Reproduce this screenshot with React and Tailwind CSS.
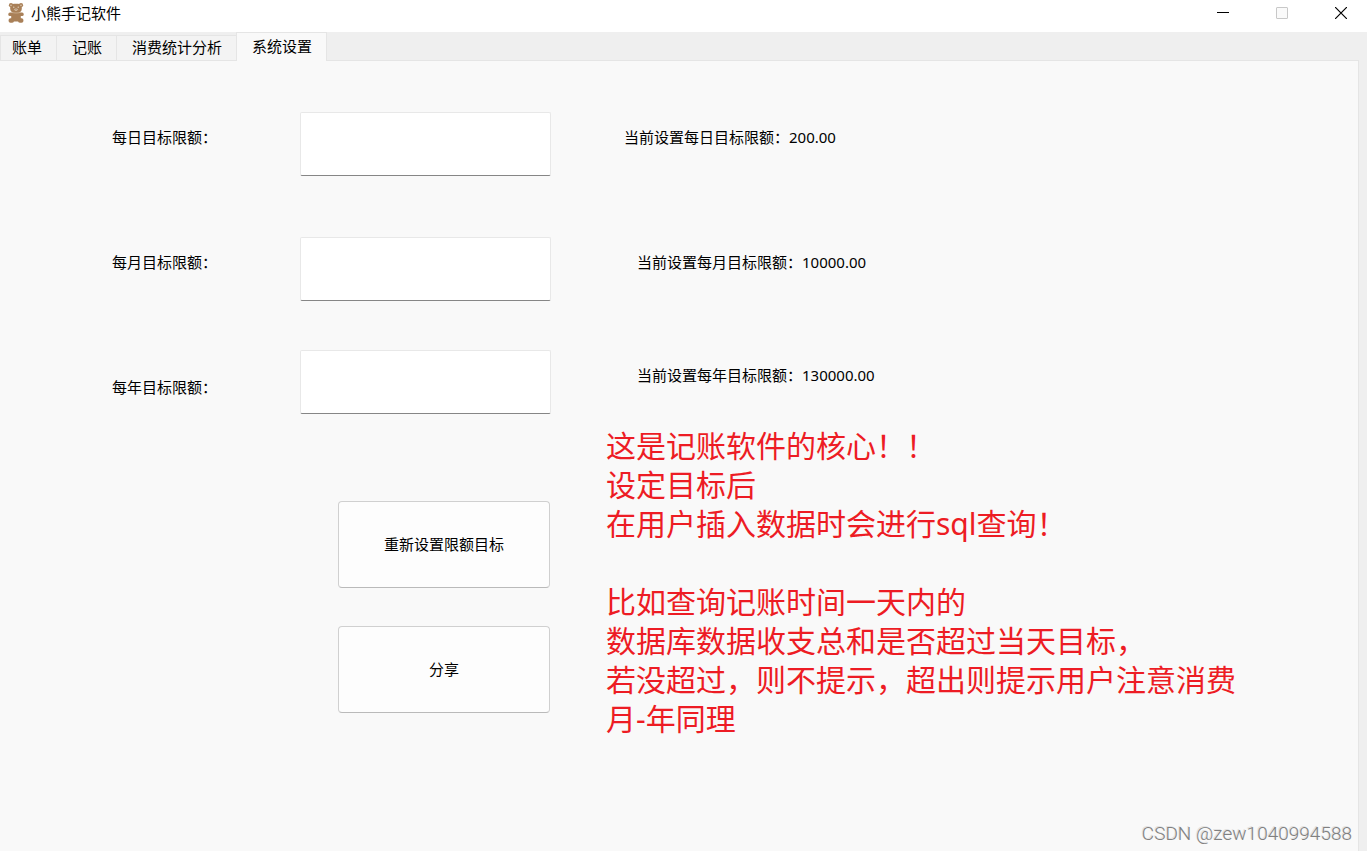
import React, { useState } from "react";
import clsx from "clsx";

const TABS = ["账单", "记账", "消费统计分析", "系统设置"];

const LIMITS = [
  { id: "daily", label: "每日目标限额：", current: "当前设置每日目标限额：200.00", row: "h-[125px]", labelPos: "mt-[15px]", currentPos: "ml-[73px]" },
  { id: "monthly", label: "每月目标限额：", current: "当前设置每月目标限额：10000.00", row: "h-[113px]", labelPos: "mt-[15px]", currentPos: "ml-[86px]" },
  { id: "yearly", label: "每年目标限额：", current: "当前设置每年目标限额：130000.00", row: "h-[76px]", labelPos: "mt-[27px]", currentPos: "ml-[86px]" },
];

const NOTES = [
  "这是记账软件的核心！！",
  "设定目标后",
  "在用户插入数据时会进行sql查询！",
  "",
  "比如查询记账时间一天内的",
  "数据库数据收支总和是否超过当天目标，",
  "若没超过，则不提示，超出则提示用户注意消费",
  "月-年同理",
];

const BearIcon = () => (
  <svg viewBox="0 0 16 20" className="h-5 w-4" fill="#a98058">
    <circle cx="3" cy="2.2" r="2.1" />
    <circle cx="13" cy="2.2" r="2.1" />
    <rect x="2.2" y="0.8" width="11.6" height="8.8" rx="4" />
    <rect x="3.2" y="9" width="9.6" height="9.4" rx="3" />
    <rect x="0.3" y="9.6" width="15.4" height="3.4" rx="1.6" />
    <rect x="0.6" y="15.2" width="5.4" height="4.6" rx="1.8" />
    <rect x="10" y="15.2" width="5.4" height="4.6" rx="1.8" />
    <circle cx="3" cy="2.4" r="0.8" fill="#d8c2a8" />
    <circle cx="13" cy="2.4" r="0.8" fill="#d8c2a8" />
    <ellipse cx="8" cy="6.6" rx="1.6" ry="1.2" fill="#e0cdb8" />
    <circle cx="5.8" cy="4.2" r="0.6" fill="#f0e6da" />
    <circle cx="10.2" cy="4.2" r="0.6" fill="#f0e6da" />
    <circle cx="8" cy="6.3" r="0.5" fill="#7d5a3a" />
    <path d="M3.5 9.4c2.8 0.8 6.2 0.8 9 0" fill="none" stroke="#d8c2a8" strokeWidth="0.6" />
  </svg>
);

const TitleBar = () => (
  <header className="flex h-8 items-start justify-between bg-white">
    <div className="flex items-center gap-[7px] pt-[3px] pl-2">
      <BearIcon />
      <h1 className="leading-5">小熊手记软件</h1>
    </div>
    <div className="flex h-[26px] items-center gap-[47px] pr-5">
      <button type="button" aria-label="最小化">
        <svg viewBox="0 0 12 12" className="size-3" stroke="#000">
          <path d="M0 5.5h12" />
        </svg>
      </button>
      <button type="button" aria-label="最大化" disabled>
        <svg viewBox="0 0 12 12" className="size-3" fill="#fafafa" stroke="#c8c8c8">
          <rect x="0.5" y="0.5" width="11" height="11" rx="0.5" />
        </svg>
      </button>
      <button type="button" aria-label="关闭">
        <svg viewBox="0 0 12 12" className="size-3" stroke="#000" strokeWidth="1.2">
          <path d="M0 0l12 12M12 0L0 12" />
        </svg>
      </button>
    </div>
  </header>
);

const TabBar = ({ active, onChange }) => (
  <nav role="tablist" className="flex h-[29px] items-end bg-[#efefef]">
    {TABS.map((tab) => (
      <button
        key={tab}
        type="button"
        role="tab"
        aria-selected={tab === active}
        onClick={() => onChange(tab)}
        className={clsx(
          "border-t border-l border-[#e5e5e5] pr-3.5 pb-0.5 pl-[15px] leading-5 first:pl-[11px]",
          tab === active ? "h-[29px] border-r bg-[#f9f9f9]" : "h-[26px] border-b bg-[#f3f3f3]"
        )}
      >
        {tab}
      </button>
    ))}
    <div className="mr-2 h-px flex-1 bg-[#e5e5e5]" />
  </nav>
);

const LimitRow = ({ limit }) => (
  <div className={clsx("flex items-start", limit.row)}>
    <label htmlFor={limit.id} className={clsx("w-[188px] leading-5", limit.labelPos)}>
      {limit.label}
    </label>
    <input
      id={limit.id}
      type="text"
      className="h-16 w-[251px] rounded-xs border border-[#e8e8e8] border-b-[#868686] bg-white px-2 outline-none"
    />
    <output htmlFor={limit.id} className={clsx("mt-[15px] leading-5 whitespace-nowrap", limit.currentPos)}>
      {limit.current}
    </output>
  </div>
);

const ActionButton = ({ children }) => (
  <button
    type="button"
    className="h-[87px] w-[212px] rounded-[4px] border border-[#d0d0d0] border-b-[#bababa] bg-[#fdfdfd] pb-0.5 leading-5"
  >
    {children}
  </button>
);

const App = () => {
  const [active, setActive] = useState("系统设置");

  return (
    <div className="flex min-h-screen flex-col bg-[#efefef] font-['Noto_Sans','Noto_Sans_CJK_SC',sans-serif] text-[15px] text-black">
      <TitleBar />
      <TabBar active={active} onChange={setActive} />
      <main className="relative mr-2 flex-1 border-r border-[#e5e5e5] bg-[#f9f9f9] pt-[51px]">
        <form className="pl-28" onSubmit={(e) => e.preventDefault()}>
          {LIMITS.map((limit) => (
            <LimitRow key={limit.id} limit={limit} />
          ))}
          <div className="flex items-start gap-14 pl-[226px]">
            <div className="flex flex-col gap-[38px] pt-[75px]">
              <ActionButton>重新设置限额目标</ActionButton>
              <ActionButton>分享</ActionButton>
            </div>
            <div className="text-[30px] leading-[39px] whitespace-nowrap text-[#ed1c24]">
              {NOTES.map((line, i) => (
                <p key={i} className="h-[39px]">{line}</p>
              ))}
            </div>
          </div>
        </form>
        <p className="absolute right-1.5 bottom-[7px] font-['Roboto',sans-serif] text-[19px] leading-5 font-light text-[#808080] [text-shadow:-1px_-1px_0_#e2e2e2]">
          CSDN @zew1040994588
        </p>
      </main>
    </div>
  );
};

export default App;
